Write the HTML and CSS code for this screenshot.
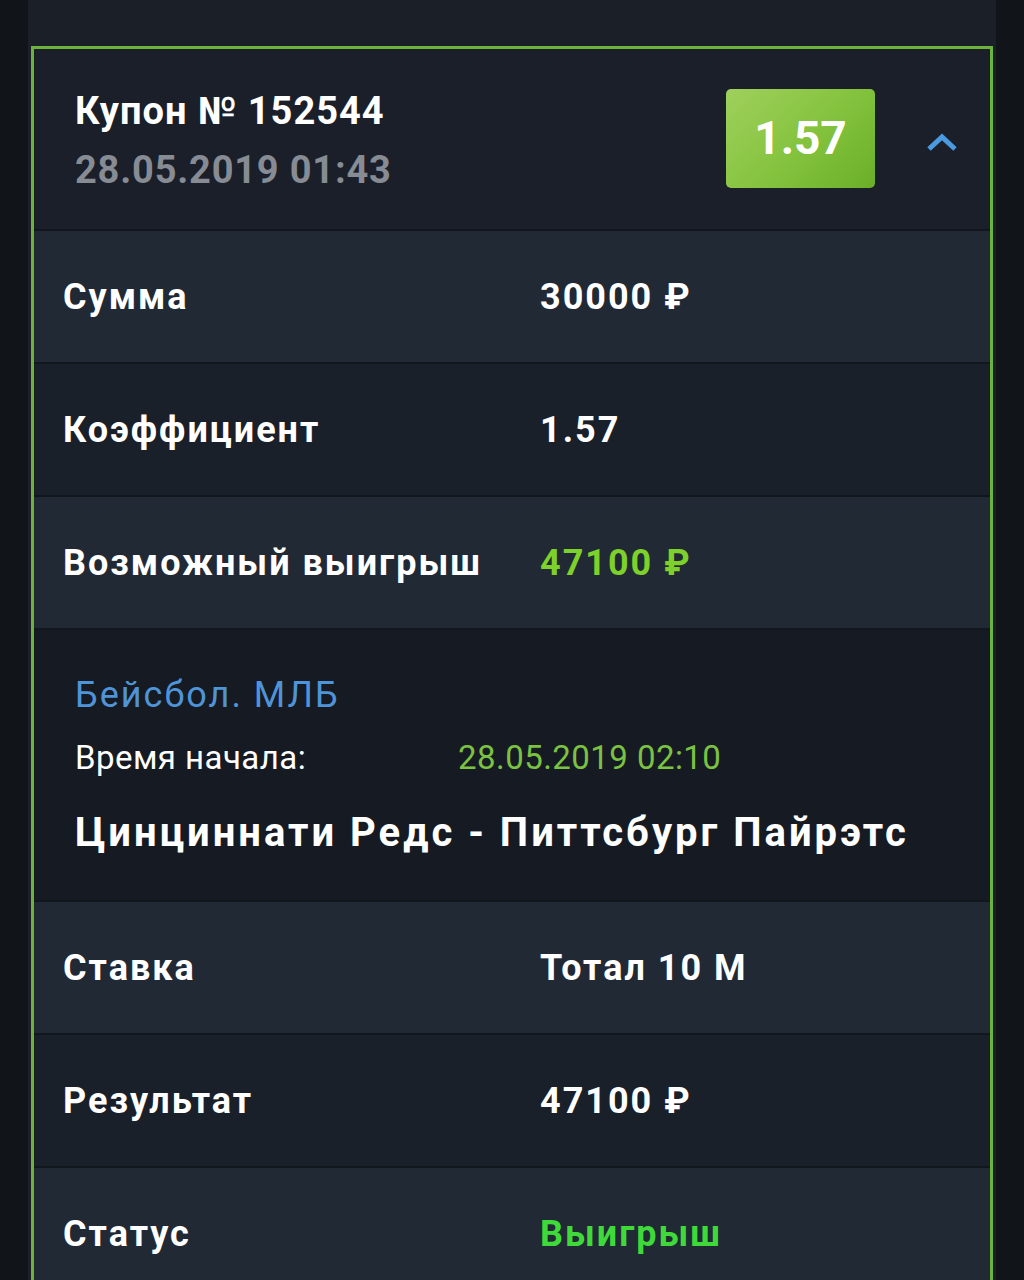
FILE: index.html
```html
<!DOCTYPE html>
<html lang="ru">
<head>
<meta charset="utf-8">
<title>Купон № 152544</title>
<link rel="stylesheet" href="styles.css">
</head>
<body>
<div class="frame">
  <div class="coupon">
    <div class="head">
      <div class="head-text">
        <div class="title">Купон № 152544</div>
        <div class="date">28.05.2019 01:43</div>
      </div>
      <div class="head-right">
        <div class="badge">1.57</div>
        <svg class="chevron" width="32" height="20" viewBox="0 0 32 20"><polyline points="3,17 16,5 29,17" fill="none" stroke="#4a9ae2" stroke-width="5"/></svg>
      </div>
    </div>
    <div class="row light"><span class="label">Сумма</span><span class="value">30000 ₽</span></div>
    <div class="row dark"><span class="label">Коэффициент</span><span class="value">1.57</span></div>
    <div class="row light"><span class="label">Возможный выигрыш</span><span class="value win">47100 ₽</span></div>
    <div class="event">
      <div class="league">Бейсбол. МЛБ</div>
      <div class="start"><span class="start-label">Время начала:</span><span class="start-value">28.05.2019 02:10</span></div>
      <div class="match">Цинциннати Редс - Питтсбург Пайрэтс</div>
    </div>
    <div class="row light"><span class="label">Ставка</span><span class="value">Тотал 10 М</span></div>
    <div class="row dark"><span class="label">Результат</span><span class="value">47100 ₽</span></div>
    <div class="row light"><span class="label">Статус</span><span class="value status">Выигрыш</span></div>
  </div>
</div>
</body>
</html>
```
FILE: styles.css
```css
html, body {
  margin: 0;
  padding: 0;
  background: #111418;
  height: 1280px;
  overflow: hidden;
}
body {
  font-family: Roboto, "Liberation Sans", "DejaVu Sans", sans-serif;
  color: #ffffff;
}
.frame {
  margin: 0 28px;
  background: #1a1f28;
  padding: 46px 3px 0 3px;
  height: 1234px;
}
.coupon {
  border: 3px solid #6cb33e;
  border-bottom: none;
  height: 1231px;
  overflow: hidden;
  background: #1a1f29;
}
.head {
  display: flex;
  justify-content: space-between;
  align-items: center;
  height: 180px;
  box-sizing: border-box;
  padding: 0 32px 0 41px;
}
.head-text {
  padding-top: 2px;
}
.title {
  font-size: 38px;
  font-weight: 700;
  line-height: 46px;
  letter-spacing: 1px;
}
.date {
  font-size: 38px;
  font-weight: 700;
  line-height: 46px;
  margin-top: 13px;
  color: #868b94;
  letter-spacing: 0.8px;
}
.head-right {
  display: flex;
  align-items: center;
  gap: 51px;
}
.badge {
  width: 149px;
  height: 99px;
  border-radius: 5px;
  background: linear-gradient(135deg, #9fd05c 0%, #86c440 50%, #6aaf27 100%);
  display: flex;
  align-items: center;
  justify-content: center;
  font-size: 46px;
  font-weight: 700;
  color: #ffffff;
  margin-top: -2px;
}
.chevron {
  display: block;
  margin-top: 6px;
}
.row {
  display: flex;
  align-items: center;
  height: 133px;
  box-sizing: border-box;
  border-top: 2px solid #12161d;
  padding-left: 29px;
  font-size: 36px;
  font-weight: 700;
  letter-spacing: 2px;
}
.row.light { background: #212935; }
.row.dark { background: #1a202a; }
.label {
  width: 477px;
  flex: none;
}
.value.win { color: #7ed02a; }
.value.status { color: #3fd93a; }
.event {
  border-top: 2px solid #12161d;
  background: #161b23;
  height: 272px;
  box-sizing: border-box;
  padding: 43px 0 0 41px;
}
.league {
  font-size: 36px;
  line-height: 44px;
  color: #4f94d8;
  letter-spacing: 2px;
}
.start {
  display: flex;
  margin-top: 21px;
  font-size: 33px;
  line-height: 40px;
  letter-spacing: 0.45px;
}
.start-label {
  width: 383px;
  flex: none;
}
.start-value {
  color: #7cc242;
}
.match {
  margin-top: 31px;
  font-size: 40px;
  font-weight: 700;
  line-height: 48px;
  letter-spacing: 3px;
}
```
